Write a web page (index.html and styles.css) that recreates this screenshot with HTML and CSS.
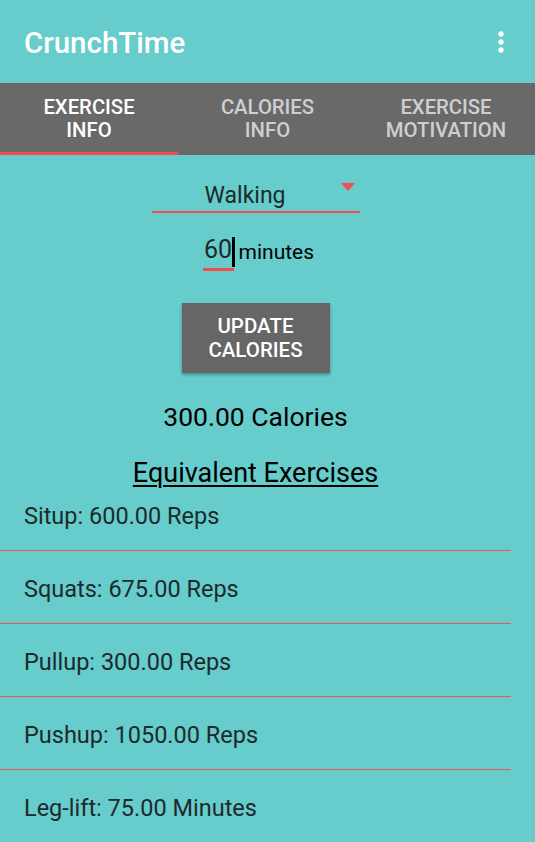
FILE: index.html
```html
<!DOCTYPE html>
<html>
<head>
<meta charset="utf-8">
<link rel="stylesheet" href="styles.css">
</head>
<body>
<div class="appbar">
  <div class="title">CrunchTime</div>
  <svg class="menu" width="12" height="26" viewBox="0 0 12 26"><circle cx="6" cy="5" r="2.7" fill="#fff"/><circle cx="6" cy="13" r="2.7" fill="#fff"/><circle cx="6" cy="21" r="2.7" fill="#fff"/></svg>
</div>
<div class="tabs">
  <div class="tab active">EXERCISE<br>INFO</div>
  <div class="tab">CALORIES<br>INFO</div>
  <div class="tab">EXERCISE<br>MOTIVATION</div>
</div>
<div class="content">
  <div class="spinner">
    <span class="spin-text">Walking</span>
    <span class="arrow"></span>
  </div>
  <div class="input-row">
    <span class="num">60</span><span class="cursor"></span><span class="unit">minutes</span>
  </div>
  <button class="btn">UPDATE<br>CALORIES</button>
  <div class="calories">300.00 Calories</div>
  <div class="heading">Equivalent Exercises</div>
  <div class="list">
    <div class="item">Situp: 600.00 Reps</div>
    <div class="item">Squats: 675.00 Reps</div>
    <div class="item">Pullup: 300.00 Reps</div>
    <div class="item">Pushup: 1050.00 Reps</div>
    <div class="item last">Leg-lift: 75.00 Minutes</div>
  </div>
</div>
</body>
</html>
```
FILE: styles.css
```css
html, body {
  margin: 0;
  padding: 0;
  background: #66cccc;
  font-family: Roboto, "Liberation Sans", sans-serif;
  height: 842px;
  overflow: hidden;
}
.appbar {
  height: 83px;
  display: flex;
  align-items: center;
  justify-content: space-between;
  padding: 0 28px 0 24px;
}
.title {
  color: #fff;
  font-size: 29.5px;
  line-height: 34px;
  font-weight: 500;
  margin-top: 3px;
}
.tabs {
  height: 72px;
  background: #696969;
  display: grid;
  grid-template-columns: 178px 179px 178px;
}
.tab {
  display: flex;
  align-items: center;
  justify-content: center;
  text-align: center;
  color: #cfcfcf;
  font-size: 20.3px;
  font-weight: 500;
  line-height: 23px;
}
.tab.active {
  color: #fff;
  box-shadow: inset 0 -3px 0 #f44d4d;
}
.content {
  width: 511px;
  display: flex;
  flex-direction: column;
  align-items: center;
}
.spinner {
  margin-top: 21px;
  width: 208px;
  height: 37px;
  padding-top: 3px;
  border-bottom: 2px solid #f44d4d;
  position: relative;
  box-sizing: border-box;
  display: flex;
  align-items: center;
}
.spin-text {
  margin-left: 53px;
  font-size: 23px;
  color: #1d2a2a;
}
.arrow {
  position: absolute;
  right: 5px;
  top: 7px;
  width: 0;
  height: 0;
  border-left: 7.5px solid transparent;
  border-right: 7.5px solid transparent;
  border-top: 8px solid #f44d4d;
}
.input-row {
  margin-top: 22px;
  display: flex;
  align-items: flex-start;
  margin-left: 6px;
}
.num {
  font-size: 25px;
  color: #1d2a2a;
  line-height: 30px;
  padding: 0 2px 3px 1px;
  border-bottom: 3px solid #f44d4d;
}
.cursor {
  width: 2.5px;
  height: 30px;
  background: #000;
  margin: 2px 4px 0 -2px;
}
.unit {
  font-size: 21px;
  line-height: 30px;
  color: #000;
  margin-top: 2px;
}
.btn {
  margin-top: 32px;
  width: 148px;
  height: 70px;
  background: #666666;
  border: none;
  color: #fff;
  font-family: Roboto, "Liberation Sans", sans-serif;
  font-size: 20.5px;
  font-weight: 500;
  line-height: 24px;
  box-shadow: 0 2px 3px rgba(0,0,0,0.3);
  padding: 0;
}
.calories {
  margin-top: 29px;
  font-size: 26.5px;
  color: #000;
  line-height: 30px;
}
.heading {
  margin-top: 25px;
  font-size: 27px;
  color: #000;
  text-decoration: underline;
  text-decoration-thickness: 2px;
  text-underline-offset: 3px;
  line-height: 32px;
}
.list {
  align-self: stretch;
}
.item {
  padding: 24px 0 20px 24px;
  border-bottom: 1px solid #ee5555;
  font-size: 23.5px;
  color: #1d2a2a;
  line-height: 28px;
}
.item:first-child {
  padding-top: 13px;
}
.item.last {
  border-bottom: none;
}
```
